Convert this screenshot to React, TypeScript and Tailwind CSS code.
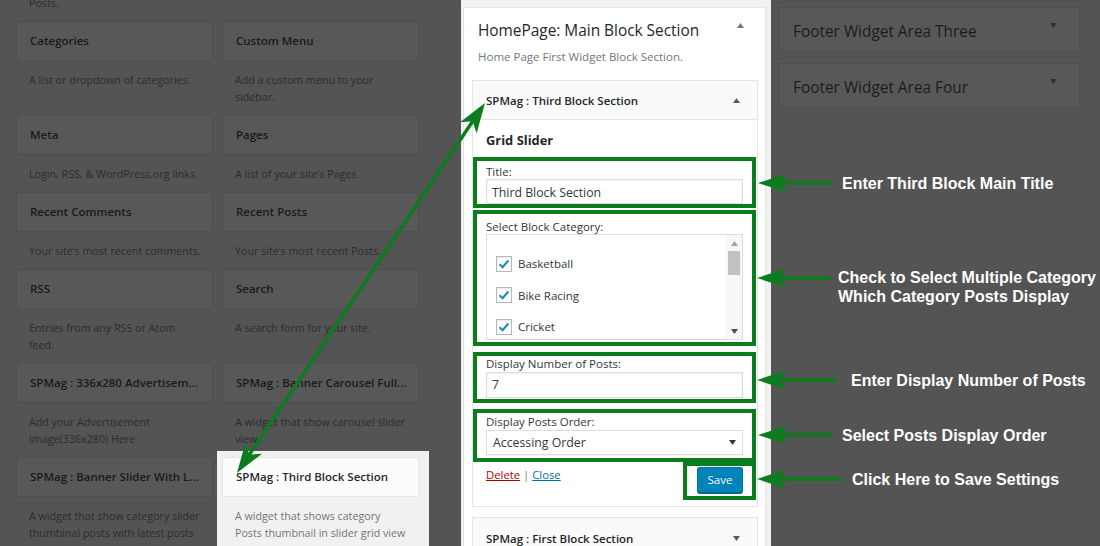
import React from "react";

const GREEN = "#0c7d1f";

type Item = { t: string; d: string[]; hl?: boolean };

const rows: Item[][] = [
  [
    { t: "Categories", d: ["A list or dropdown of categories."] },
    { t: "Custom Menu", d: ["Add a custom menu to your", "sidebar."] },
  ],
  [
    { t: "Meta", d: ["Login, RSS, & WordPress.org links."] },
    { t: "Pages", d: ["A list of your site\u2019s Pages."] },
  ],
  [
    { t: "Recent Comments", d: ["Your site\u2019s most recent comments."] },
    { t: "Recent Posts", d: ["Your site\u2019s most recent Posts."] },
  ],
  [
    { t: "RSS", d: ["Entries from any RSS or Atom", "feed."] },
    { t: "Search", d: ["A search form for your site."] },
  ],
  [
    { t: "SPMag : 336x280 Advertisem...", d: ["Add your Advertisement", "Image(336x280) Here"] },
    { t: "SPMag : Banner Carousel Full...", d: ["A widget that show carousel slider", "view"] },
  ],
  [
    { t: "SPMag : Banner Slider With L...", d: ["A widget that show category slider", "thumbinal posts with latest posts"] },
    { t: "SPMag : Third Block Section", d: ["A widget that shows category", "Posts thumbnail in slider grid view"], hl: true },
  ],
];

function TriUp({ color }: { color: string }) {
  return (
    <svg width="7" height="5" viewBox="0 0 7 5" className="block">
      <path d="M0 5 L3.5 0 L7 5 Z" fill={color} />
    </svg>
  );
}

function TriDown({ color }: { color: string }) {
  return (
    <svg width="7" height="5" viewBox="0 0 7 5" className="block">
      <path d="M0 0 L7 0 L3.5 5 Z" fill={color} />
    </svg>
  );
}

function LeftItem({ item }: { item: Item }) {
  if (item.hl) {
    return (
      <div className="-mt-[6px] -ml-[5px] -mr-[10px] bg-[#f1f1f1] pt-[6px] pl-[5px] pr-[10px]">
        <div className="flex h-[40px] items-center border border-[#e5e5e5] bg-[#fcfcfc] pl-[13px] text-[11.5px] font-semibold text-[#23282d]">
          {item.t}
        </div>
        <div className="px-[13px] pt-[11px] pb-[9px] text-[10.7px] leading-[17px] text-[#72777c]">
          {item.d.map((l) => (
            <div key={l}>{l}</div>
          ))}
        </div>
      </div>
    );
  }
  return (
    <div>
      <div className="flex h-[40px] items-center border border-[#4f4f4f] bg-[#585858] pl-[13px] text-[11.5px] font-semibold text-[#1a1a1a] whitespace-nowrap">
        {item.t}
      </div>
      <div className="px-[13px] pt-[11px] pb-[9px] text-[10.7px] leading-[17px] text-[#2c2c2c] whitespace-nowrap">
        {item.d.map((l) => (
          <div key={l}>{l}</div>
        ))}
      </div>
    </div>
  );
}

function LeftColumn() {
  return (
    <div className="w-[461px] shrink-0 pl-[16px]">
      <div className="-mt-[5px] pl-[13px] pb-[9px] text-[10.7px] leading-[17px] text-[#2c2c2c]">Posts.</div>
      <div className="grid w-[403px] grid-cols-[197px_197px] gap-x-[9px]">
        {rows.flat().map((it) => (
          <LeftItem key={it.t} item={it} />
        ))}
      </div>
    </div>
  );
}

function Check() {
  return (
    <div className="flex h-[16px] w-[16px] items-center justify-center border border-[#b4b9be] bg-white shadow-[inset_0_1px_2px_rgba(0,0,0,0.1)]">
      <svg width="14" height="14" viewBox="0 0 14 14">
        <path d="M2.6 7.2 L5.6 10.2 L11.4 3.6" fill="none" stroke="#1e8cbe" strokeWidth="2.2" />
      </svg>
    </div>
  );
}

function GreenBox({ className, children }: { className: string; children: React.ReactNode }) {
  return <div className={"border-[4px] border-[#0c7d1f] " + className}>{children}</div>;
}

function MiddleColumn() {
  return (
    <div className="w-[310px] shrink-0 bg-[#f1f1f1] pl-[2px] pr-[5px] pt-[7px]">
      <div className="h-[600px] border border-[#e5e5e5] bg-white">
        <div className="flex items-start justify-between pl-[14px] pr-[21px] pt-[13px]">
          <div className="text-[15.4px] leading-[20px] text-[#23282d]">HomePage: Main Block Section</div>
          <div className="mt-[2px]">
            <TriUp color="#72777c" />
          </div>
        </div>
        <div className="mt-[8px] pl-[14px] text-[11.5px] leading-[16px] text-[#72777c]">
          Home Page First Widget Block Section.
        </div>

        {/* Third block widget */}
        <div className="ml-[8px] mr-[7px] mt-[15px] border border-[#e5e5e5]">
          <div className="flex h-[39px] items-center justify-between border-b border-[#e5e5e5] bg-[#fafafa] pl-[13px] pr-[17px]">
            <span className="pt-[1px] text-[11.5px] font-semibold text-[#23282d]">SPMag : Third Block Section</span>
            <TriUp color="#555d66" />
          </div>
          <div className="bg-white pb-[6px]">
            <div className="px-[13px] pt-[11px] text-[12.9px] font-bold leading-[18px] text-[#23282d]">Grid Slider</div>

            <GreenBox className="mt-[8px] mr-[1px] px-[9px] pt-[4px]">
              <div className="text-[11.5px] leading-[14px] text-[#32373c]">Title:</div>
              <div className="flex h-[25px] items-center border border-[#dddddd] bg-white px-[5px] pt-[3px] text-[12.3px] text-[#32373c] shadow-[inset_0_1px_2px_rgba(0,0,0,0.07)]">
                Third Block Section
              </div>
            </GreenBox>

            <GreenBox className="mt-[2px] mr-[1px] px-[9px] pt-[6px] pb-[2px]">
              <div className="text-[11.5px] leading-[14px] text-[#32373c]">Select Block Category:</div>
              <div className="flex h-[106px] overflow-hidden border border-[#dddddd] bg-white">
                <div className="flex-1 pl-[9px] pt-[13px]">
                  {["Basketball", "Bike Racing", "Cricket"].map((c) => (
                    <div key={c} className="flex h-[31.5px] items-center gap-[6px]">
                      <Check />
                      <span className="text-[11.5px] text-[#32373c]">{c}</span>
                    </div>
                  ))}
                </div>
                <div className="flex w-[16px] flex-col bg-[#f7f7f7]">
                  <div className="flex h-[16px] items-center justify-center">
                    <TriUp color="#a3a3a3" />
                  </div>
                  <div className="mx-[2px] h-[24px] bg-[#c1c1c1]" />
                  <div className="flex-1" />
                  <div className="flex h-[15px] items-center justify-center">
                    <TriDown color="#505050" />
                  </div>
                </div>
              </div>
            </GreenBox>

            <GreenBox className="mt-[6px] mr-[1px] px-[9px] pt-[1px] pb-[1px]">
              <div className="text-[11.5px] leading-[14px] text-[#32373c]">Display Number of Posts:</div>
              <div className="mt-[1px] flex h-[26px] items-center border border-[#dddddd] bg-white px-[5px] pt-[1px] text-[12.3px] text-[#32373c] shadow-[inset_0_1px_2px_rgba(0,0,0,0.07)]">
                7
              </div>
            </GreenBox>

            <GreenBox className="mt-[6px] mr-[1px] px-[9px] pt-[2px] pb-[3px]">
              <div className="text-[11.5px] leading-[14px] text-[#32373c]">Display Posts Order:</div>
              <div className="mt-[1px] flex h-[25px] items-center justify-between border border-[#dddddd] bg-white pl-[6px] pr-[6px] text-[12.3px] text-[#32373c] shadow-[0_1px_1px_rgba(0,0,0,0.04)]">
                <span className="pt-[2px]">Accessing Order</span>
                <TriDown color="#32373c" />
              </div>
            </GreenBox>

            <div className="flex items-start justify-between">
              <div className="pl-[13px] pt-[5px] text-[11.3px] leading-[16px]">
                <span className="text-[#aa0000] underline">Delete</span>
                <span className="text-[#72777c]"> | </span>
                <span className="text-[#0073aa] underline">Close</span>
              </div>
              <GreenBox className="mr-[1px] w-[73px] pl-[10px] pt-[1px] pb-[3px]">
                <div className="flex h-[26px] w-[46px] items-center justify-center rounded-[3px] border border-[#0073aa] border-b-[#006799] bg-[#0085ba] text-[11.5px] text-white shadow-[0_1px_0_#006799] [text-shadow:0_-1px_1px_#006799]">
                  Save
                </div>
              </GreenBox>
            </div>
          </div>
        </div>

        {/* First block widget */}
        <div className="ml-[8px] mr-[7px] mt-[10px] border border-[#e5e5e5]">
          <div className="flex h-[40px] items-center justify-between bg-[#fafafa] pl-[13px] pr-[17px]">
            <span className="pt-[1px] text-[11.5px] font-semibold text-[#23282d]">SPMag : First Block Section</span>
            <TriDown color="#555d66" />
          </div>
        </div>
      </div>
    </div>
  );
}

function Arrow({ len }: { len: number }) {
  return (
    <svg width={len} height="20" viewBox={`0 0 ${len} 20`} className="block shrink-0">
      <rect x="21" y="8.2" width={len - 21} height="3.6" fill={GREEN} />
      <path d="M0 10 L29 0.5 L23 10 L29 19.5 Z" fill={GREEN} />
    </svg>
  );
}

function FooterBox({ title, className }: { title: string; className: string }) {
  return (
    <div className={"flex h-[45px] justify-between border border-[#4f4f4f] bg-[#585858] pl-[14px] pr-[22px] " + className}>
      <div className="self-center pt-[5px] text-[15.4px] text-[#1c1c1c]">{title}</div>
      <div className="mt-[15px]">
        <TriDown color="#2e2e2e" />
      </div>
    </div>
  );
}

function RightColumn() {
  const txt = "font-['Liberation_Sans',Arial,sans-serif] text-[16px] font-bold leading-[19px] text-white whitespace-nowrap";
  return (
    <div className="w-[329px] min-w-0 shrink-0 pl-[7px] pr-[20px] pt-[7px]">
      <FooterBox title="Footer Widget Area Three" className="" />
      <FooterBox title="Footer Widget Area Four" className="mt-[11px]" />

      <div className="-ml-[20px] mt-[65px] flex h-[20px] items-center">
        <Arrow len={74} />
        <div className={"ml-[10px] " + txt}>Enter Third Block Main Title</div>
      </div>

      <div className="-ml-[21px] mt-[75px] flex items-start">
        <div className="flex h-[19px] items-center">
          <Arrow len={73} />
        </div>
        <div className={"ml-[8px] " + txt}>
          <div>Check to Select Multiple Category</div>
          <div>Which Category Posts Display</div>
        </div>
      </div>

      <div className="-ml-[21px] mt-[64px] flex h-[20px] items-center">
        <Arrow len={80} />
        <div className={"ml-[14px] " + txt}>Enter Display Number of Posts</div>
      </div>

      <div className="-ml-[20px] mt-[35px] flex h-[20px] items-center">
        <Arrow len={74} />
        <div className={"ml-[10px] " + txt}>Select Posts Display Order</div>
      </div>

      <div className="-ml-[21px] mt-[24px] flex h-[20px] items-center">
        <Arrow len={85} />
        <div className={"ml-[10px] " + txt}>Click Here to Save Settings</div>
      </div>
    </div>
  );
}

function DiagonalArrow() {
  return (
    <svg
      width="1100"
      height="546"
      viewBox="0 0 1100 546"
      className="pointer-events-none absolute left-0 top-0"
    >
      <line x1="249.3" y1="454.7" x2="472.7" y2="121.3" stroke={GREEN} strokeWidth="3.5" />
      <path d="M237 473 L262 453.7 L249.3 454.7 L245.4 442.5 Z" fill={GREEN} />
      <path d="M485 103 L460 122.3 L472.7 121.3 L476.6 133.5 Z" fill={GREEN} />
    </svg>
  );
}

export default function App() {
  return (
    <div className="relative flex h-[546px] w-[1100px] overflow-hidden bg-[#545454] font-['Open_Sans',sans-serif]">
      <LeftColumn />
      <MiddleColumn />
      <RightColumn />
      <DiagonalArrow />
    </div>
  );
}
